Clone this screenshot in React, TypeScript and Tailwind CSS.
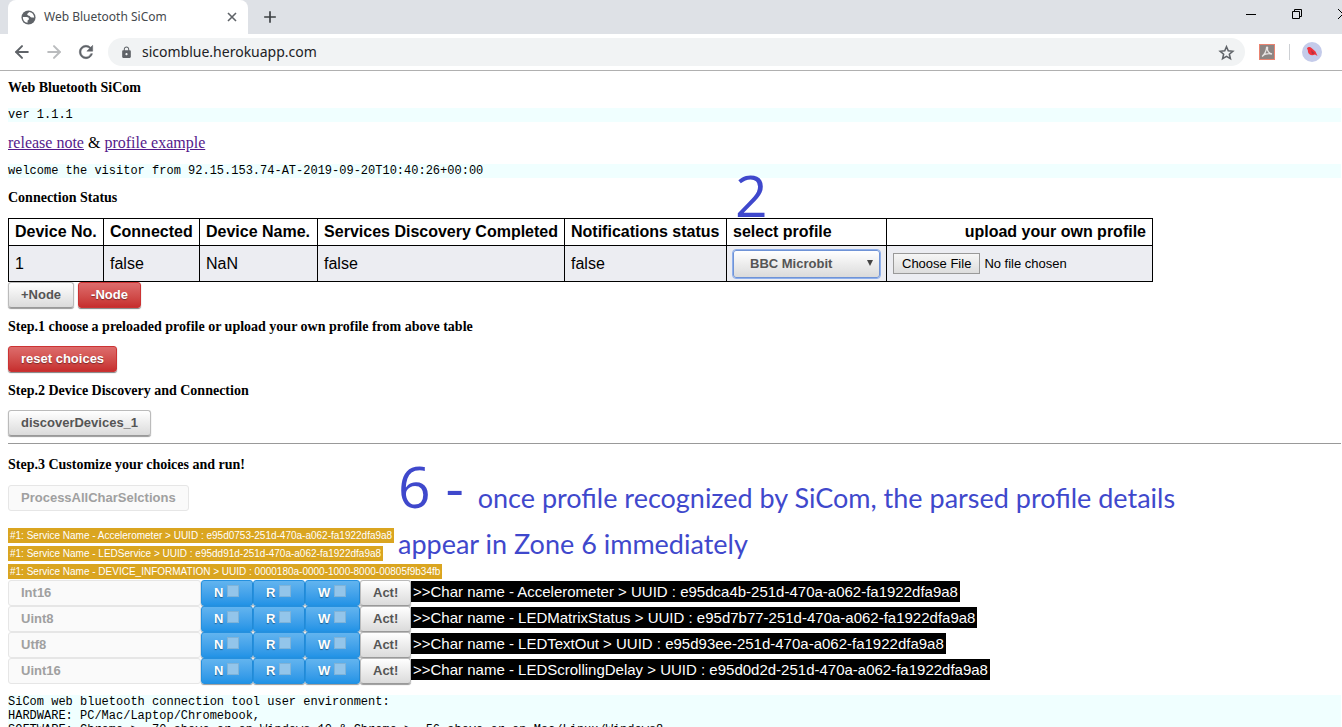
import type { ReactNode } from "react";
import { ArrowLeft, ArrowRight } from "lucide-react";
import { MdLock, MdAdd } from "react-icons/md";

const services = [
  "#1: Service Name - Accelerometer > UUID : e95d0753-251d-470a-a062-fa1922dfa9a8",
  "#1: Service Name - LEDService > UUID : e95dd91d-251d-470a-a062-fa1922dfa9a8",
  "#1: Service Name - DEVICE_INFORMATION > UUID : 0000180a-0000-1000-8000-00805f9b34fb",
];

const characteristics = [
  { type: "Int16", text: ">>Char name - Accelerometer > UUID : e95dca4b-251d-470a-a062-fa1922dfa9a8" },
  { type: "Uint8", text: ">>Char name - LEDMatrixStatus > UUID : e95d7b77-251d-470a-a062-fa1922dfa9a8" },
  { type: "Utf8", text: ">>Char name - LEDTextOut > UUID : e95d93ee-251d-470a-a062-fa1922dfa9a8" },
  { type: "Uint16", text: ">>Char name - LEDScrollingDelay > UUID : e95d0d2d-251d-470a-a062-fa1922dfa9a8" },
];

const buttonBase =
  "h-[26px] rounded-[3px] border px-3 text-[13px] leading-4 font-bold font-['Liberation_Sans',sans-serif]";
const light =
  "border-[#bbb] border-b-[#999] bg-linear-to-b from-white to-[#dbdbdb] text-[#555] shadow-[0_1px_1px_rgba(0,0,0,0.4)]";
const red =
  "border-[#c33] bg-linear-to-b from-[#dd6c6c] to-[#c62e2e] text-white shadow-[0_1px_1px_rgba(0,0,0,0.5)] [text-shadow:0_1px_1px_rgba(0,0,0,0.4)]";
const disabled = "border-[#e6e6e6] bg-[#fafafa] text-[#a0a0a0]";

function Heading({ children }: { children: ReactNode }) {
  return <h5 className="text-[14px] leading-[18px] font-bold">{children}</h5>;
}

function Log({ children }: { children: ReactNode }) {
  return (
    <pre className="bg-[#f0ffff] font-['Liberation_Mono',monospace] text-[12px] leading-[14px]">{children}</pre>
  );
}

function Flag({ name, row, wide }: { name: string; row: string; wide?: boolean }) {
  return (
    <label
      className={`flex h-[26px] ${wide ? "w-[55px]" : "w-[52px]"} items-center gap-1 rounded-[3px] border border-[#2490df] bg-linear-to-b from-[#62b4ef] to-[#2193e6] pl-3 text-[13px] font-bold text-white shadow-[0_1px_1px_rgba(0,0,0,0.4)] [text-shadow:0_1px_1px_rgba(0,0,0,0.4)]`}
    >
      {name}
      <input
        type="checkbox"
        aria-label={`${name} ${row}`}
        className="mb-1 size-3 appearance-none border border-[#7fb3d8] bg-[#93c5ea]"
      />
    </label>
  );
}

function BrowserChrome() {
  return (
    <header className="border-b border-[#b0b0b0] bg-white font-['Noto_Sans',sans-serif]">
      <div className="flex h-[34px] overflow-hidden bg-[#dee1e6] pl-2">
        <div className="flex w-60 items-center rounded-t-lg bg-white pr-[11px] pl-[13px]">
          <svg viewBox="0 0 16 16" className="size-[15px]" aria-hidden="true">
            <circle cx="8" cy="8" r="7.500" fill="#5f6368" />
            <path d="M2 7.500h4c1.600 0 2.400.8 2.400 2 0 1-.7 1.400-1.400 1.700v2.300C4 13.400 1.900 11 2 7.500z" fill="#fff" />
            <path d="M8.500 2c-.2 1.500-2 1.400-1.900 2.700.1 1.200 2 .8 2.700 1.800.6.900 1.100 1.700 2.500 1.500.9-.1 1.500-.2 2.200.2.300-3.300-2.400-6-5.500-6.200z" fill="#fff" />
          </svg>
          <span className="ml-2 flex-1 text-[12px] text-[#45494d]">Web Bluetooth SiCom</span>
          <button aria-label="Close tab" className="text-[#5f6368]">
            <svg viewBox="0 0 10 10" className="size-[10px]" fill="none" stroke="currentColor" strokeWidth="1.600"><path d="M1 1l8 8M9 1L1 9" /></svg>
          </button>
        </div>
        <button aria-label="New tab" className="ml-3 text-[#3c4043]">
          <MdAdd className="size-5" />
        </button>
        <div className="-mr-6 ml-auto flex h-7 text-black">
          <button aria-label="Minimize" className="flex w-[46px] items-center justify-center">
            <svg viewBox="0 0 10 10" className="size-[10px]" stroke="currentColor"><path d="M0 5.500h10" /></svg>
          </button>
          <button aria-label="Restore" className="flex w-[46px] items-center justify-center">
            <svg viewBox="0 0 10 10" className="size-[10px]" fill="none" stroke="currentColor"><path d="M.5 2.500h7v7h-7zM2.500 2.500v-2h7v7h-2" /></svg>
          </button>
          <button aria-label="Close" className="flex w-[46px] items-center justify-center">
            <svg viewBox="0 0 10 10" className="size-[10px]" stroke="currentColor"><path d="M0 0l10 10M10 0L0 10" /></svg>
          </button>
        </div>
      </div>
      <div className="flex h-9 items-center pr-5 pl-3">
        <button aria-label="Back" className="text-[#5f6368]"><ArrowLeft className="size-5" strokeWidth={2.4} /></button>
        <button aria-label="Forward" className="ml-3 text-[#babcbe]"><ArrowRight className="size-5" strokeWidth={2.4} /></button>
        <button aria-label="Reload" className="ml-3 text-[#5f6368]">
          <svg viewBox="0 0 24 24" className="size-5" fill="currentColor" stroke="currentColor" strokeWidth=".6">
            <path d="M17.650 6.350A7.958 7.958 0 0012 4c-4.420 0-7.990 3.580-7.990 8s3.570 8 7.990 8c3.730 0 6.840-2.550 7.730-6h-2.080A5.990 5.990 0 0112 18c-3.310 0-6-2.690-6-6s2.690-6 6-6c1.660 0 3.140.69 4.220 1.780L13 11h7V4l-2.350 2.350z" />
          </svg>
        </button>
        <div className="ml-3 flex h-7 flex-1 items-center rounded-full bg-[#f1f3f4] pr-[10px] pl-3">
          <MdLock className="size-[13px] text-[#5f6368]" />
          <input
            aria-label="Address"
            defaultValue="sicomblue.herokuapp.com"
            className="ml-[9px] h-5 min-w-0 flex-1 bg-transparent pb-px text-[14px] leading-5 text-[#202124] outline-none"
          />
          <button aria-label="Bookmark" className="text-[#5f6368]">
            <svg viewBox="0 0 24 24" className="size-[17px]" fill="none" stroke="currentColor" strokeWidth="2.200">
              <path d="M12 3.800l2.500 5.900 6.400.55-4.860 4.200 1.460 6.250L12 17.400l-5.500 3.300 1.460-6.250L3.100 10.250l6.400-.55z" />
            </svg>
          </button>
        </div>
        <svg viewBox="0 0 16 16" className="ml-[14px] size-4" aria-hidden="true">
          <rect x=".5" y=".5" width="15" height="15" fill="#8d8583" stroke="#ea8370" />
          <path d="M3 12.500c2-1.200 4.500-5.500 4.500-8.500 0-1.500 1.500-1 1 .5-.4 2 1.500 5 4.500 5.500-3-.8-6.500-.3-9.500 1.500" fill="none" stroke="#e8e5e4" strokeWidth="1.300" />
        </svg>
        <div className="ml-[14px] h-4 w-px bg-[#cdd0d4]" />
        <svg viewBox="0 0 20 20" className="ml-3 size-5" aria-hidden="true">
          <circle cx="10" cy="10" r="10" fill="#c4cbea" />
          <path d="M5 6.500C5.500 5 8 4.500 9.500 6l4 3.500 2 4.500-2.500-1.500c-3 1.400-6.500.5-7-2.500l-.2-2z" fill="#f0313c" />
          <path d="M9 8l4 3.500-3 .6z" fill="#b5303d" />
        </svg>
      </div>
    </header>
  );
}

const th = "border border-black px-[6px] text-left align-middle";
const td = "border border-black px-[6px] align-middle";

function DeviceTable() {
  return (
    <table className="mt-[11px] w-[1145px] table-fixed border-collapse font-['Liberation_Sans',sans-serif] text-[16px] leading-[18px]">
      <colgroup>
        <col className="w-[95px]" />
        <col className="w-[96px]" />
        <col className="w-[118px]" />
        <col className="w-[247px]" />
        <col className="w-[162px]" />
        <col className="w-[160px]" />
        <col className="w-[266px]" />
      </colgroup>
      <thead>
        <tr className="h-[27px] whitespace-nowrap">
          <th className={th}>Device No.</th>
          <th className={th}>Connected</th>
          <th className={th}>Device Name.</th>
          <th className="border border-black px-[6px] text-right">Services Discovery Completed</th>
          <th className={th}>Notifications status</th>
          <th className={th}>select profile</th>
          <th className="border border-black px-[6px] text-right">upload your own profile</th>
        </tr>
      </thead>
      <tbody>
        <tr className="h-9 bg-[#ecedf2]">
          <td className={td}>1</td>
          <td className={td}>false</td>
          <td className={td}>NaN</td>
          <td className={td}>false</td>
          <td className={td}>false</td>
          <td className={td}>
            <div className="relative">
              <select
                aria-label="select profile"
                className="block h-7 w-full appearance-none rounded-[3px] border border-[#6f93d6] bg-linear-to-b from-white to-[#dbdbdb] pl-4 text-[13px] font-bold text-[#555] outline outline-[#8fb0ec]"
              >
                <option>BBC Microbit</option>
              </select>
              <svg viewBox="0 0 6 6" className="pointer-events-none absolute top-[10px] right-[7px] size-[6px]" fill="#444"><path d="M0 0h6L3 6z" /></svg>
            </div>
          </td>
          <td className={td}>
            <input
              type="file"
              aria-label="upload your own profile"
              className="block w-full text-[13px] leading-4 text-black file:mr-1 file:h-[21px] file:border file:border-solid file:border-[#999] file:bg-linear-to-b file:from-[#f6f6f6] file:to-[#ddd] file:px-2 file:text-[13px] file:text-black"
            />
          </td>
        </tr>
      </tbody>
    </table>
  );
}

export default function App() {
  return (
    <div className="h-screen overflow-hidden bg-white font-['Liberation_Serif',serif] text-black">
      <BrowserChrome />
      <main className="pt-2 pr-px pl-2">
        <Heading>Web Bluetooth SiCom</Heading>
        <div className="mt-[11px]"><Log>ver 1.1.1</Log></div>
        <p className="mt-3 text-[16px] leading-[18px]">
          <a href="#release-note" className="text-[#551a8b] underline">release note</a>
          {" & "}
          <a href="#profile-example" className="text-[#551a8b] underline">profile example</a>
        </p>
        <div className="mt-3 mb-[11px]"><Log>welcome the visitor from 92.15.153.74-AT-2019-09-20T10:40:26+00:00</Log></div>
        <Heading>Connection Status</Heading>
        <div className="relative">
          <DeviceTable />
          <span className="absolute -top-[45px] left-[727px] font-['Open_Sans',sans-serif] text-[57px] leading-[44px] text-[#3f48cc]">2</span>
        </div>
        <div className="flex gap-1">
          <button className={`${buttonBase} ${light}`}>+Node</button>
          <button className={`${buttonBase} ${red}`}>-Node</button>
        </div>
        <div className="my-[10px]"><Heading>Step.1 choose a preloaded profile or upload your own profile from above table</Heading></div>
        <button className={`block ${buttonBase} ${red}`}>reset choices</button>
        <div className="my-[10px]"><Heading>Step.2 Device Discovery and Connection</Heading></div>
        <button className={`block ${buttonBase} ${light}`}>discoverDevices_1</button>
        <hr className="mt-[7px] mb-3 border-t border-[#999]" />
        <section className="relative">
          <Heading>Step.3 Customize your choices and run!</Heading>
          <button disabled className={`mt-[11px] block ${buttonBase} ${disabled}`}>ProcessAllCharSelctions</button>
          <ul className="mt-[17px] flex flex-col items-start gap-[3px] font-['Liberation_Sans',sans-serif] text-[10px] leading-[15px] text-white">
            {services.map((s) => (
              <li key={s} className="bg-[#daa520] px-[2px] whitespace-nowrap">{s}</li>
            ))}
          </ul>
          <ul className="mt-px font-['Liberation_Sans',sans-serif]">
            {characteristics.map((c) => (
              <li key={c.type} className="flex items-start">
                <button disabled className={`w-[193px] text-left ${buttonBase} ${disabled}`}>{c.type}</button>
                <Flag name="N" row={c.type} />
                <Flag name="R" row={c.type} />
                <Flag name="W" row={c.type} wide />
                <button className={`w-[51px] ${buttonBase} ${light}`}>Act!</button>
                <span className="mt-px bg-black px-[2px] text-[15px] leading-[21px] whitespace-nowrap text-white">{c.text}</span>
              </li>
            ))}
          </ul>
          <p className="absolute -top-[5px] left-[390px] font-['Lato',sans-serif] text-[27px] leading-[45px] whitespace-nowrap text-[#3f48cc]">
            <span className="mr-[14px] font-['Open_Sans',sans-serif] text-[57px] leading-[70px]">6 -</span>
            once profile recognized by SiCom, the parsed profile details
            <br />
            appear in Zone 6 immediately
          </p>
        </section>
        <div className="mt-[11px]">
          <Log>{`SiCom web bluetooth connection tool user environment:
HARDWARE: PC/Mac/Laptop/Chromebook,
SOFTWARE: Chrome >= 70 above or on Windows 10 & Chrome >= 56 above or on Mac/Linux/Windows8`}</Log>
        </div>
      </main>
    </div>
  );
}
